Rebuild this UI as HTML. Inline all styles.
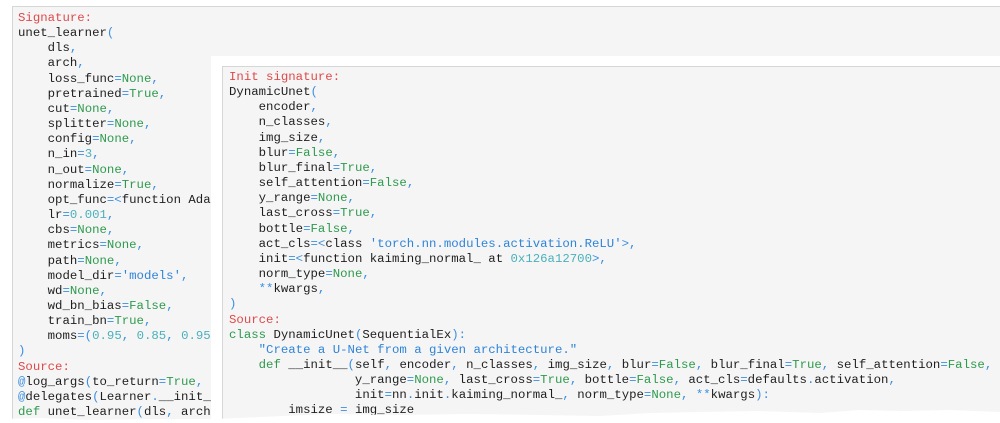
<!DOCTYPE html>
<html style="width:1000px;height:423px;overflow:hidden"><head><style>
body{margin:0;width:1000px;height:423px;overflow:hidden;background:#fff;position:relative;font-family:"Liberation Mono",monospace;}
pre{margin:0;font-family:"Liberation Mono",monospace;font-size:12.35px;line-height:15.15px;color:#1e1e1e;position:absolute;white-space:pre;}
.r{color:#e0494a}.g{color:#2e9a4e}.b{color:#3b8fe0}.n{color:#4bb0bb}.s{color:#2e84d8}
#outer{position:absolute;left:12px;top:6px;width:988px;height:417px;background:#f5f5f5;border-top:1px solid #d6d6d6;border-left:1px solid #d6d6d6;overflow:hidden}
#wp{position:absolute;left:211px;top:56px;width:789px;height:367px;background:#fff}
#inner{position:absolute;left:222px;top:66px;width:778px;height:357px;background:#f5f5f5;border-top:1px solid #d6d6d6;border-left:1px solid #d6d6d6}
#lc{position:absolute;left:0;top:0;width:211px;height:423px;overflow:hidden}
</style></head><body>
<div id="outer"></div>
<div id="lc">
<pre style="left:18px;top:11px"><span class="r">Signature:</span>
unet_learner<span class="b">(</span>
    dls<span class="b">,</span>
    arch<span class="b">,</span>
    loss_func<span class="b">=</span><span class="g">None</span><span class="b">,</span>
    pretrained<span class="b">=</span><span class="g">True</span><span class="b">,</span>
    cut<span class="b">=</span><span class="g">None</span><span class="b">,</span>
    splitter<span class="b">=</span><span class="g">None</span><span class="b">,</span>
    config<span class="b">=</span><span class="g">None</span><span class="b">,</span>
    n_in<span class="b">=</span><span class="n">3</span><span class="b">,</span>
    n_out<span class="b">=</span><span class="g">None</span><span class="b">,</span>
    normalize<span class="b">=</span><span class="g">True</span><span class="b">,</span>
    opt_func<span class="b">=&lt;</span>function Adam<span class="b">&gt;,</span>
    lr<span class="b">=</span><span class="n">0.001</span><span class="b">,</span>
    cbs<span class="b">=</span><span class="g">None</span><span class="b">,</span>
    metrics<span class="b">=</span><span class="g">None</span><span class="b">,</span>
    path<span class="b">=</span><span class="g">None</span><span class="b">,</span>
    model_dir<span class="b">=</span><span class="s">'models'</span><span class="b">,</span>
    wd<span class="b">=</span><span class="g">None</span><span class="b">,</span>
    wd_bn_bias<span class="b">=</span><span class="g">False</span><span class="b">,</span>
    train_bn<span class="b">=</span><span class="g">True</span><span class="b">,</span>
    moms<span class="b">=(</span><span class="n">0.95</span><span class="b">,</span> <span class="n">0.85</span><span class="b">,</span> <span class="n">0.95</span><span class="b">),</span>
<span class="b">)</span>
<span class="r">Source:</span>
<span class="b">@</span>log_args<span class="b">(</span>to_return<span class="b">=</span><span class="g">True</span><span class="b">,</span>
<span class="b">@</span>delegates<span class="b">(</span>Learner<span class="b">.</span>__init__<span class="b">)</span>
<span class="g">def</span> unet_learner<span class="b">(</span>dls<span class="b">,</span> arch<span class="b">,</span>
    model <span class="b">=</span> get</pre>
</div>
<div id="wp"></div>
<div id="inner"></div>
<pre style="left:229px;top:70px"><span class="r">Init signature:</span>
DynamicUnet<span class="b">(</span>
    encoder<span class="b">,</span>
    n_classes<span class="b">,</span>
    img_size<span class="b">,</span>
    blur<span class="b">=</span><span class="g">False</span><span class="b">,</span>
    blur_final<span class="b">=</span><span class="g">True</span><span class="b">,</span>
    self_attention<span class="b">=</span><span class="g">False</span><span class="b">,</span>
    y_range<span class="b">=</span><span class="g">None</span><span class="b">,</span>
    last_cross<span class="b">=</span><span class="g">True</span><span class="b">,</span>
    bottle<span class="b">=</span><span class="g">False</span><span class="b">,</span>
    act_cls<span class="b">=&lt;</span>class <span class="s">'torch.nn.modules.activation.ReLU'</span><span class="b">&gt;,</span>
    init<span class="b">=&lt;</span>function kaiming_normal_ at <span class="n">0x126a12700</span><span class="b">&gt;,</span>
    norm_type<span class="b">=</span><span class="g">None</span><span class="b">,</span>
    <span class="b">**</span>kwargs<span class="b">,</span>
<span class="b">)</span>
<span class="r">Source:</span>
<span class="g">class</span> DynamicUnet<span class="b">(</span>SequentialEx<span class="b">):</span>
    <span class="s">"Create a U-Net from a given architecture."</span>
    <span class="g">def</span> __init__<span class="b">(</span>self<span class="b">,</span> encoder<span class="b">,</span> n_classes<span class="b">,</span> img_size<span class="b">,</span> blur<span class="b">=</span><span class="g">False</span><span class="b">,</span> blur_final<span class="b">=</span><span class="g">True</span><span class="b">,</span> self_attention<span class="b">=</span><span class="g">False</span><span class="b">,</span>
                 y_range<span class="b">=</span><span class="g">None</span><span class="b">,</span> last_cross<span class="b">=</span><span class="g">True</span><span class="b">,</span> bottle<span class="b">=</span><span class="g">False</span><span class="b">,</span> act_cls<span class="b">=</span>defaults<span class="b">.</span>activation<span class="b">,</span>
                 init<span class="b">=</span>nn<span class="b">.</span>init<span class="b">.</span>kaiming_normal_<span class="b">,</span> norm_type<span class="b">=</span><span class="g">None</span><span class="b">,</span> <span class="b">**</span>kwargs<span class="b">):</span>
        imsize <span class="b">=</span> img_size
        sizes <span class="b">=</span> model_sizes<span class="b">(</span>encoder<span class="b">,</span> size<span class="b">=</span>imsize<span class="b">)</span></pre>
<svg style="position:absolute;left:0;top:0" width="1000" height="423">
<polygon fill="#fff" points="0,423 0,419 40,418 90,420 150,419 215,419 260,417 330,414 400,415 470,414 540,415 600,416 650,413 700,412 760,411 820,413 860,410 900,411 950,410 1000,412 1000,423"/>
</svg>
</body></html>
